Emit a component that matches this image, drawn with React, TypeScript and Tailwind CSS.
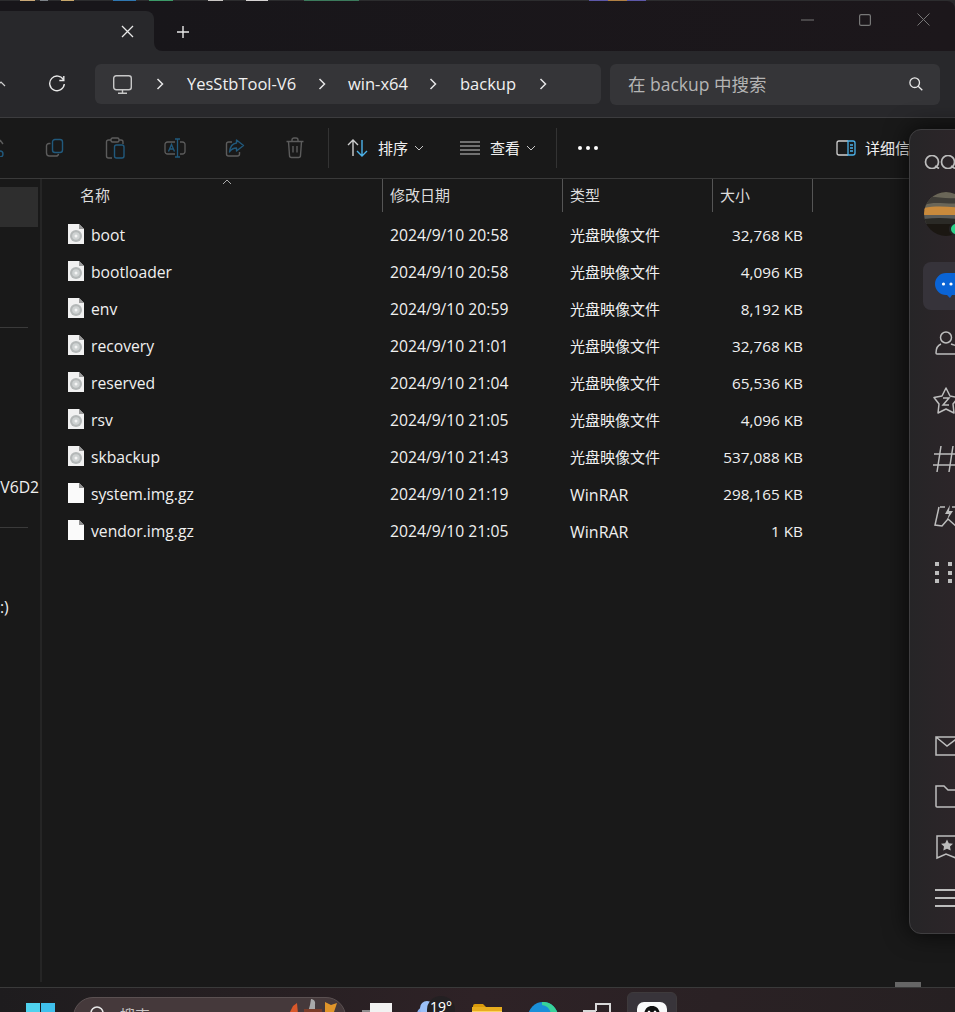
import React from "react";

const UI = { fontFamily: '"Open Sans","Noto Sans CJK SC",sans-serif' };

function Chevron() {
  return (
    <svg width="10" height="14" viewBox="0 0 10 14" fill="none" stroke="#e6e6e6" strokeWidth="1.5"><path d="M2.5 2 L7.5 7 L2.5 12" /></svg>
  );
}
function Down() {
  return (
    <svg width="10" height="6" viewBox="0 0 10 6" fill="none" stroke="#c8c8c8" strokeWidth="1"><path d="M1 1 L5 5 L9 1" /></svg>
  );
}

const G = "#5c5c5c";
const B = "#21597c";

function CopyI() {
  return (
    <svg width="20" height="20" viewBox="0 0 20 20" fill="none" strokeWidth="1.4">
      <path d="M5.5 5.5 H4 a2.5 2.5 0 0 0-2.5 2.5 v7 a3 3 0 0 0 3 3 h6.5 a2.5 2.5 0 0 0 2.5-2.2" stroke={G} />
      <rect x="7.5" y="1.5" width="10" height="13" rx="2.5" stroke={B} />
    </svg>
  );
}
function PasteI() {
  return (
    <svg width="20" height="22" viewBox="0 0 20 22" fill="none" strokeWidth="1.4">
      <path d="M6 3 H3.5 a2 2 0 0 0-2 2 v14 a2 2 0 0 0 2 2 H7 M14 3 h2 a2 2 0 0 1 2 2 v2" stroke={G} />
      <rect x="6" y="1" width="8" height="4" rx="1.5" stroke={G} />
      <rect x="9.5" y="8" width="9.5" height="13" rx="2" stroke={B} />
    </svg>
  );
}
function RenameI() {
  return (
    <svg width="22" height="20" viewBox="0 0 22 20" fill="none" strokeWidth="1.3">
      <path d="M11 4 H3.5 a2.5 2.5 0 0 0-2.5 2.5 v7 a2.5 2.5 0 0 0 2.5 2.5 H11 M16 4 h2.5 a2.5 2.5 0 0 1 2.5 2.5 v7 a2.5 2.5 0 0 1-2.5 2.5 H16" stroke={G} />
      <path d="M11 1 h5 M13.5 1 v18 M11 19 h5 M4.5 13.5 L7.5 6.5 L10.5 13.5 M5.5 11 h4" stroke={B} />
    </svg>
  );
}
function ShareI() {
  return (
    <svg width="20" height="20" viewBox="0 0 20 20" fill="none" strokeWidth="1.4">
      <path d="M7 4 H3.5 a2 2 0 0 0-2 2 v10 a2 2 0 0 0 2 2 h9 a2 2 0 0 0 2-2 v-2" stroke={G} />
      <path d="M11.5 2 L18.5 7.5 L11.5 13 V10 C8 10 6 11.5 4.5 14 C5 9 7.5 5.5 11.5 5 Z" stroke={B} strokeLinejoin="round" />
    </svg>
  );
}
function TrashI() {
  return (
    <svg width="20" height="22" viewBox="0 0 20 22" fill="none" stroke={G} strokeWidth="1.4">
      <path d="M1.5 4.5 h17 M7 4.5 V3 a2 2 0 0 1 2-2 h2 a2 2 0 0 1 2 2 v1.5 M3.5 4.5 l1 14 a2 2 0 0 0 2 2 h7 a2 2 0 0 0 2-2 l1-14 M8 9 v6.5 M12 9 v6.5" />
    </svg>
  );
}

function DiscFile() {
  return (
    <svg width="16" height="20" viewBox="0 0 16 20" className="-mt-[3px] shrink-0">
      <path d="M0 0 H11 L16 5 V20 H0 Z" fill="#f1f1f1" />
      <path d="M11 0 V5 H16 Z" fill="#9a9a9a" />
      <circle cx="8" cy="12" r="6" fill="#b4b8b8" />
      <circle cx="8" cy="12" r="3.8" fill="#cfd3d3" />
      <circle cx="8" cy="12" r="1.5" fill="#f4f4f4" />
    </svg>
  );
}
function PlainFile() {
  return (
    <svg width="16" height="20" viewBox="0 0 16 20" className="-mt-[3px] shrink-0">
      <path d="M0 0 H11 L16 5 V20 H0 Z" fill="#fafafa" />
      <path d="M11 0 V5 H16 Z" fill="#8f8f8f" />
    </svg>
  );
}

const rows = [
  ["boot", "2024/9/10 20:58", "光盘映像文件", "32,768 KB", 1],
  ["bootloader", "2024/9/10 20:58", "光盘映像文件", "4,096 KB", 1],
  ["env", "2024/9/10 20:59", "光盘映像文件", "8,192 KB", 1],
  ["recovery", "2024/9/10 21:01", "光盘映像文件", "32,768 KB", 1],
  ["reserved", "2024/9/10 21:04", "光盘映像文件", "65,536 KB", 1],
  ["rsv", "2024/9/10 21:05", "光盘映像文件", "4,096 KB", 1],
  ["skbackup", "2024/9/10 21:43", "光盘映像文件", "537,088 KB", 1],
  ["system.img.gz", "2024/9/10 21:19", "WinRAR", "298,165 KB", 0],
  ["vendor.img.gz", "2024/9/10 21:05", "WinRAR", "1 KB", 0],
] as const;

const Q = "#bdbdbd";

function Strip() {
  const segs = [
    [20, 15, "#c9a877"], [5, 8, "#7d8288"], [13, 13, "#c7a76b"], [39, 23, "#2f76b0"], [13, 24, "#3c9a68"],
    [35, 15, "#c9c6c4"], [23, 22, "#d6d3d3"], [36, 55, "#3c7a5c"], [230, 19, "#5d58a8"], [0, 19, "#b08044"], [0, 19, "#5d58a8"],
  ] as const;
  return (
    <div className="flex h-px shrink-0 bg-[#2c2c2e]">
      {segs.map(([m, w, c], i) => (
        <div key={i} style={{ marginLeft: m, width: w, background: c }} />
      ))}
    </div>
  );
}

function QQPanel() {
  return (
    <div className="absolute left-[909px] top-[129px] flex h-[805px] w-[80px] flex-col rounded-l-xl border border-[#3f3e40] bg-gradient-to-r from-[#262527] to-[#30252a] pl-[14px] shadow-[0_0_24px_rgba(0,0,0,0.75)]">
      <svg width="36" height="14" viewBox="0 0 36 14" fill="none" stroke={Q} strokeWidth="1.7" className="mt-[25px] shrink-0">
        <circle cx="8" cy="7" r="6.5" /><path d="M11 11 L15 13.5" />
        <circle cx="24" cy="7" r="6.5" /><path d="M27 11 L31 13.5" />
      </svg>
      <div className="relative mt-[23px] h-[44px] w-[44px] shrink-0">
        <svg width="44" height="44" viewBox="0 0 44 44" className="rounded-full">
          <rect width="44" height="44" fill="#1b1712" />
          <rect width="44" height="18" fill="#6a6658" />
          <path d="M0 6 C10 2 22 10 44 4 V10 C26 14 12 8 0 13 Z" fill="#3f3d38" />
          <path d="M0 16 C14 13 30 15 44 17 V23 H0 Z" fill="#c98a3c" />
          <rect x="0" y="23" width="44" height="9" fill="#5a5b58" />
          <path d="M0 27 C14 25 30 26 44 29 V32 H0 Z" fill="#2b2a26" />
        </svg>
        <div className="absolute left-[25px] top-[30px] h-[14px] w-[14px] rounded-full border-2 border-[#252427] bg-[#2bd48a]" />
      </div>
      <div className="-ml-[1px] mt-[26px] flex h-[48px] w-[60px] shrink-0 items-center rounded-l-lg rounded-r-lg bg-[#36333a] pl-[12px]">
        <svg width="30" height="26" viewBox="0 0 30 26" className="shrink-0">
          <path d="M11 0 H30 V22 H17 L15 25 L12 22 H11 A11 11 0 0 1 11 0 Z" fill="#0a64d6" />
          <circle cx="8.5" cy="11" r="1.6" fill="#fff" /><circle cx="16" cy="11" r="1.6" fill="#fff" />
        </svg>
      </div>
      <svg width="30" height="24" viewBox="0 0 30 24" fill="none" stroke={Q} strokeWidth="1.5" className="ml-[11px] mt-[21px] shrink-0">
        <circle cx="11" cy="6.5" r="5.5" />
        <path d="M6 13 C2 14.5 1 17 1 22 a1 1 0 0 0 1 1 H22 M16 13 C20 14.5 24 15 25 17" />
      </svg>
      <svg width="30" height="28" viewBox="0 0 30 28" fill="none" stroke={Q} strokeWidth="1.5" className="ml-[9px] mt-[32px] shrink-0">
        <path d="M13 1 L17 9 L25 10.5 L20 17 L21 26 L13 22 L5 26 L6 17 L1 10.5 L9 9 Z" strokeLinejoin="round" />
        <path d="M10 11 H16 L10 18 H16" />
      </svg>
      <svg width="30" height="28" viewBox="0 0 30 28" fill="none" stroke={Q} strokeWidth="1.5" className="ml-[9px] mt-[30px] shrink-0">
        <path d="M8 1 L4 27 M20 1 L16 27 M1 9 H27 M0 20 H26" />
      </svg>
      <svg width="30" height="26" viewBox="0 0 30 26" fill="none" stroke={Q} strokeWidth="1.5" className="ml-[10px] mt-[31px] shrink-0">
        <path d="M6 3 H11 M18 3 H30 M5 3 L1 21 L8 22 L14 15 L24 24 H30" />
        <path d="M16 1 L11 10 H15 L13 16 L19 7 H15 Z" fill={Q} stroke="none" />
      </svg>
      <div className="ml-[11px] mt-[32px] grid w-[34px] shrink-0 grid-cols-3 gap-x-[5.5px] gap-y-[4.5px]">
        {[0, 1, 2, 3, 4, 5, 6, 7, 8].map((i) => (
          <div key={i} className="h-[4px] w-[4px] bg-[#bdbdbd]" />
        ))}
      </div>
      <svg width="30" height="20" viewBox="0 0 30 20" fill="none" stroke={Q} strokeWidth="1.5" className="ml-[11px] mt-[153px] shrink-0">
        <path d="M30 1 H1 V19 H30 M1 1 L12 10 L24 1" />
      </svg>
      <svg width="30" height="23" viewBox="0 0 30 23" fill="none" stroke={Q} strokeWidth="1.5" className="ml-[11px] mt-[29px] shrink-0">
        <path d="M30 22 H2 a1 1 0 0 1-1-1 V1 H9 L13 5 H30" />
      </svg>
      <svg width="30" height="25" viewBox="0 0 30 25" fill="none" className="ml-[12px] mt-[27px] shrink-0">
        <path d="M30 1 H1 V23 L10 19 L20 23 L30 19" stroke={Q} strokeWidth="1.5" />
        <path d="M11 4.5 L12.8 8.2 L17 8.8 L14 11.6 L14.7 15.5 L11 13.7 L7.3 15.5 L8 11.6 L5 8.8 L9.2 8.2 Z" fill={Q} />
      </svg>
      <div className="ml-[11px] mt-[29px] flex w-[30px] shrink-0 flex-col gap-[6px]">
        <div className="h-[2px] bg-[#bdbdbd]" />
        <div className="h-[2px] bg-[#bdbdbd]" />
        <div className="h-[2px] bg-[#bdbdbd]" />
      </div>
    </div>
  );
}

function Taskbar() {
  return (
    <div className="flex h-[25px] shrink-0 items-start overflow-hidden border-t border-[#3a3a3a] bg-gradient-to-r from-[#1e1c1e] via-[#2e2226] to-[#262022]">
      <div className="ml-[26px] mt-[15px] grid w-[29px] shrink-0 grid-cols-2 gap-[1px]">
        <div className="h-[14px] bg-[#4fd2ee]" /><div className="h-[14px] bg-[#3fc0ec]" />
        <div className="h-[14px] bg-[#2aa8e0]" /><div className="h-[14px] bg-[#2aa8e0]" />
      </div>
      <div className="relative ml-[18px] mt-[9px] flex h-[40px] w-[273px] shrink-0 items-start rounded-t-[20px] border border-[#5b5152] bg-[#45393b] pl-[15px] pt-[7px]">
        <svg width="18" height="18" viewBox="0 0 18 18" fill="none" stroke="#e8e8e8" strokeWidth="1.6"><circle cx="8" cy="8" r="6" /><path d="M12 12 L16 16" /></svg>
        <span className="ml-[13px] text-[15px] leading-[20px] text-[#c9c4c4]">搜索</span>
        <svg width="50" height="16" viewBox="0 0 50 16" className="absolute right-[6px] top-[1px]">
          <path d="M0 15 L4 7 L8 4 L9 15 Z" fill="#d9582a" />
          <path d="M22 0 a4 4 0 0 1 4 5 v8 h-7 l2-7 Z" fill="#a9a9a9" />
          <path d="M15 10 h18 v6 h-18 Z" fill="#7b3c28" />
          <path d="M36 3 L42 6 L48 4 L46 10 L44 16 H36 Z" fill="#e0952a" />
        </svg>
      </div>
      <svg width="30" height="15" viewBox="0 0 30 15" className="ml-[16px] mt-[15px] shrink-0">
        <path d="M8 0 H30 V15 H0 V7 H8 Z" fill="#f2f2f2" /><path d="M0 7 H8 V15 H0 Z" fill="#8e8e8e" />
      </svg>
      <div className="ml-[25px] flex shrink-0 items-start">
        <div className="relative h-[25px] w-[35px]">
          <div className="absolute left-0 top-[19px] h-[14px] w-[18px] rounded-full bg-[#8fb4f4]" />
          <div className="absolute left-[3px] top-[13px] h-[14px] w-[14px] rounded-full bg-[#9cc0f8]" />
          <div className="absolute left-[10px] top-[8px] flex h-[30px] w-[28px] items-start justify-center rounded-full bg-[#232022] pt-[1px] text-[14px] leading-[20px] text-white" style={{ fontFamily: '"Noto Sans",sans-serif' }}>19°</div>
        </div>
      </div>
      <svg width="30" height="15" viewBox="0 0 30 15" className="ml-[20px] mt-[16px] shrink-0">
        <path d="M1 2 a2 2 0 0 1 2-2 H11 L14 3 H1 Z" fill="#d99a0b" />
        <path d="M0 6 H30 V15 H0 Z" fill="#fcd462" />
        <path d="M0 3 H30 V7 H0 Z" fill="#e8ad1e" />
      </svg>
      <svg width="30" height="20" viewBox="0 0 30 20" className="ml-[26px] mt-[14px] shrink-0">
        <path d="M0 15 A15 15 0 0 1 30 15 V20 H0 Z" fill="#1a8fd8" />
        <path d="M14 0 A15 15 0 0 1 30 15 V20 H20 A10 10 0 0 0 14 3 Z" fill="#38d39a" />
      </svg>
      <svg width="28" height="15" viewBox="0 0 28 15" fill="none" stroke="#d8d8d8" strokeWidth="2" className="ml-[25px] mt-[15px] shrink-0">
        <path d="M13 8 V1 H27 V15 M0 8 H13" />
      </svg>
      <div className="ml-[16px] mt-[4px] flex h-[40px] w-[50px] shrink-0 justify-center rounded-md border border-[#3e3a3c] bg-[#38343a] pt-[9px]">
        <svg width="30" height="30" viewBox="0 0 30 30">
          <rect width="30" height="30" rx="7" fill="#fafafa" />
          <path d="M15 4 C9 4 7 9 7 14 C7 20 10 24 15 24 C20 24 23 20 23 14 C23 9 21 4 15 4 Z" fill="#111" />
          <ellipse cx="12" cy="11" rx="1.5" ry="2.5" fill="#fff" /><ellipse cx="18" cy="11" rx="1.5" ry="2.5" fill="#fff" />
        </svg>
      </div>
    </div>
  );
}

export default function App() {
  return (
    <div className="relative flex h-[1012px] w-[955px] flex-col overflow-hidden bg-[#191919] text-[#f0f0f0]" style={UI}>
      <Strip />
      <div className="flex h-[50px] shrink-0 bg-[#28282b]">
        <div className="h-full w-[154px] shrink-0 bg-[#18161a] pt-[10px]">
          <div className="flex h-[40px] items-start justify-end rounded-tr-lg bg-[#28282b] pr-[20px] pt-[14px]">
            <svg width="13" height="13" viewBox="0 0 13 13" stroke="#e8e8e8" strokeWidth="1.3"><path d="M1 1 L12 12 M12 1 L1 12" /></svg>
          </div>
        </div>
        <div className="flex flex-1 items-start rounded-bl-lg rounded-tr-lg bg-gradient-to-r from-[#18161a] to-[#1c171b] pt-[25px]">
          <svg width="12" height="12" viewBox="0 0 12 12" stroke="#e8e8e8" strokeWidth="1.4" className="ml-[23px] shrink-0"><path d="M6 0 V12 M0 6 H12" /></svg>
          <svg width="13" height="2" viewBox="0 0 13 2" stroke="#777" strokeWidth="1" className="ml-[612px] mt-[-7px] shrink-0"><path d="M0 1 H13" /></svg>
          <svg width="12" height="12" viewBox="0 0 12 12" fill="none" stroke="#777" strokeWidth="1.2" className="ml-[45px] mt-[-12px] shrink-0"><rect x="0.6" y="0.6" width="10.8" height="10.8" rx="1.5" /></svg>
          <svg width="13" height="13" viewBox="0 0 13 13" stroke="#777" strokeWidth="1" className="ml-[46px] mt-[-13px] shrink-0"><path d="M0.5 0.5 L12.5 12.5 M12.5 0.5 L0.5 12.5" /></svg>
        </div>
      </div>

      <div className="flex h-[67px] shrink-0 items-center border-b border-[#3c3c3e] bg-[#28282b]">
        <svg width="6" height="6" viewBox="0 0 6 6" fill="none" stroke="#d0d0d0" strokeWidth="1.2" className="shrink-0"><path d="M-3 5 L1 1 L5 5" /></svg>
        <svg width="18" height="18" viewBox="0 0 18 18" fill="none" stroke="#e8e8e8" strokeWidth="1.4" className="ml-[42px] shrink-0">
          <path d="M15.5 5 A7.3 7.3 0 1 0 16.3 9" /><path d="M15.8 1 V5.5 H11.3" />
        </svg>
        <div className="ml-[29px] flex h-[40px] w-[506px] shrink-0 items-center rounded-md bg-[#353538] pl-[18px] text-[16.5px]">
          <svg width="19" height="19" viewBox="0 0 19 19" fill="none" stroke="#c8c8c8" strokeWidth="1.4" className="shrink-0">
            <rect x="0.7" y="0.7" width="17.6" height="14" rx="2.5" /><path d="M9.5 15 V18 M5 18.3 H14" />
          </svg>
          <div className="ml-[23px] shrink-0"><Chevron /></div>
          <span className="ml-[22px] w-[110px] shrink-0 whitespace-nowrap">YesStbTool-V6</span>
          <div className="ml-[20px] shrink-0"><Chevron /></div>
          <span className="ml-[21px] w-[61px] shrink-0 whitespace-nowrap">win-x64</span>
          <div className="ml-[19px] shrink-0"><Chevron /></div>
          <span className="ml-[22px] w-[56px] shrink-0 whitespace-nowrap">backup</span>
          <div className="ml-[22px] shrink-0"><Chevron /></div>
        </div>
        <div className="ml-[9px] flex h-[41px] w-[330px] shrink-0 items-center justify-between rounded-md bg-[#353538] pl-[18px] pr-[17px] text-[17.5px] text-[#b4b4b4]">
          <span className="whitespace-nowrap">在 backup 中搜索</span>
          <svg width="14" height="14" viewBox="0 0 14 14" fill="none" stroke="#e8e8e8" strokeWidth="1.3"><circle cx="5.7" cy="5.7" r="4.8" /><path d="M9.2 9.2 L13.3 13.3" /></svg>
        </div>
      </div>

      <div className="flex h-[61px] shrink-0 items-center border-b border-[#3a3a3a] bg-[#191919] text-[15px]">
        <svg width="6" height="18" viewBox="0 0 6 18" fill="none" strokeWidth="1.4" className="shrink-0">
          <path d="M0 1 L3 5" stroke={G} /><circle cx="0" cy="15" r="3" stroke={B} />
        </svg>
        <div className="ml-[19px] flex h-[60px] w-[60px] shrink-0 items-center justify-center"><CopyI /></div>
        <div className="flex h-[60px] w-[60px] shrink-0 items-center justify-center"><PasteI /></div>
        <div className="flex h-[60px] w-[60px] shrink-0 items-center justify-center"><RenameI /></div>
        <div className="flex h-[60px] w-[60px] shrink-0 items-center justify-center"><ShareI /></div>
        <div className="flex h-[60px] w-[60px] shrink-0 items-center justify-center"><TrashI /></div>
        <div className="ml-[3px] h-[40px] w-px shrink-0 bg-[#333]" />
        <svg width="21" height="18" viewBox="0 0 21 18" fill="none" strokeWidth="1.4" className="ml-[18px] shrink-0">
          <path d="M6 17 V1 M1 6 L6 1 L11 6" stroke="#cfcfcf" />
          <path d="M15 1 V17 M10 12 L15 17 L20 12" stroke="#4cb2ea" />
        </svg>
        <span className="ml-[10px] w-[30px] shrink-0">排序</span>
        <div className="ml-[6px] shrink-0"><Down /></div>
        <svg width="20" height="14" viewBox="0 0 20 14" stroke="#c8c8c8" strokeWidth="1.2" className="ml-[36px] shrink-0">
          <path d="M0 1 H20 M0 5 H20 M0 9 H20 M0 13 H20" />
        </svg>
        <span className="ml-[10px] w-[30px] shrink-0">查看</span>
        <div className="ml-[6px] shrink-0"><Down /></div>
        <div className="ml-[20px] h-[40px] w-px shrink-0 bg-[#333]" />
        <div className="ml-[21px] flex w-[20px] shrink-0 justify-between">
          <div className="h-[4px] w-[4px] rounded-full bg-white" /><div className="h-[4px] w-[4px] rounded-full bg-white" /><div className="h-[4px] w-[4px] rounded-full bg-white" />
        </div>
        <svg width="20" height="16" viewBox="0 0 20 16" fill="none" strokeWidth="1.3" className="ml-[238px] shrink-0">
          <path d="M12 1 H3 a2 2 0 0 0-2 2 v10 a2 2 0 0 0 2 2 H12" stroke="#d0d0d0" />
          <path d="M12 1 H17 a2 2 0 0 1 2 2 v10 a2 2 0 0 1-2 2 H12 Z M14 5 H17 M14 8 H17 M14 11 H17" stroke="#4cb2ea" />
        </svg>
        <span className="ml-[9px] shrink-0 whitespace-nowrap">详细信息</span>
      </div>

      <div className="flex min-h-0 flex-1">
        <div className="flex w-[40px] shrink-0 flex-col text-[15.7px]">
          <div className="mt-[8px] h-[40px] w-[38px] shrink-0 bg-[#2e2e2e]" />
          <div className="mt-[100px] h-px w-[28px] shrink-0 bg-[#3a3a3a]" />
          <div className="mt-[149px] flex h-[20px] w-[39px] shrink-0 items-center justify-end whitespace-nowrap leading-[20px]">V6D2</div>
          <div className="mt-[30px] h-px w-[28px] shrink-0 bg-[#3a3a3a]" />
          <div className="mt-[69px] h-[20px] shrink-0 whitespace-nowrap leading-[20px]">:)</div>
        </div>
        <div className="w-[2px] shrink-0 bg-[#252525]" />
        <div className="min-w-0 flex-1 text-[15px]">
          <div className="flex h-[33px] text-[#dcdcdc]">
            <div className="relative w-[341px] shrink-0 border-r border-[#555] pl-[38px] pt-[6px] leading-[20px]">
              名称
              <svg width="10" height="6" viewBox="0 0 10 6" fill="none" stroke="#aaa" strokeWidth="1" className="absolute left-[180px] top-0"><path d="M1 5 L5 1 L9 5" /></svg>
            </div>
            <div className="w-[180px] shrink-0 border-r border-[#555] pl-[7px] pt-[6px] leading-[20px]">修改日期</div>
            <div className="w-[150px] shrink-0 border-r border-[#555] pl-[7px] pt-[6px] leading-[20px]">类型</div>
            <div className="w-[100px] shrink-0 border-r border-[#555] pl-[7px] pt-[6px] leading-[20px]">大小</div>
          </div>
          <div className="mt-[5px] flex flex-col">
            {rows.map(([name, date, type, size, disc]) => (
              <div key={name} className="flex h-[37px] items-center">
                <div className="flex w-[341px] shrink-0 items-center pl-[26px]">
                  {disc ? <DiscFile /> : <PlainFile />}
                  <span className="ml-[7px] text-[15.7px]">{name}</span>
                </div>
                <div className="w-[180px] shrink-0 whitespace-nowrap pl-[7px] text-[15.7px]">{date}</div>
                <div className={disc ? "w-[150px] shrink-0 pl-[7px]" : "w-[150px] shrink-0 pl-[7px] text-[16px]"}>{type}</div>
                <div className="w-[90px] shrink-0 whitespace-nowrap text-right text-[15.3px]">{size}</div>
              </div>
            ))}
          </div>
        </div>
      </div>

      <div className="flex h-[5px] shrink-0 justify-end">
        <div className="mr-[34px] h-[5px] w-[26px] bg-[#666]" />
      </div>
      <Taskbar />
      <QQPanel />
    </div>
  );
}
